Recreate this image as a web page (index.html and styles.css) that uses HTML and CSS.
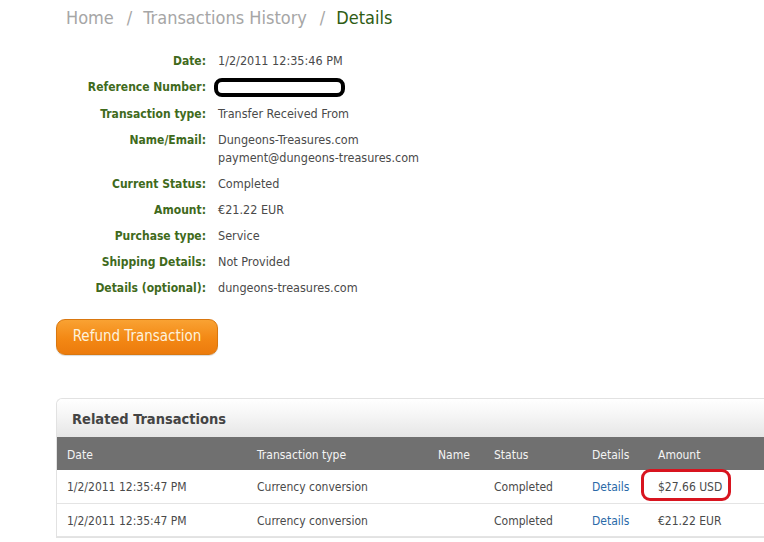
FILE: index.html
```html
<!DOCTYPE html>
<html>
<head>
<meta charset="utf-8">
<link rel="stylesheet" href="styles.css">
</head>
<body>
<div class="page">
  <nav class="crumbs">
    <span class="crumb">Home</span><span class="sep">/</span><span class="crumb">Transactions History</span><span class="sep">/</span><span class="crumb current">Details</span>
  </nav>

  <dl class="details">
    <div class="row"><dt>Date:</dt><dd>1/2/2011 12:35:46 PM</dd></div>
    <div class="row"><dt>Reference Number:</dt><dd><span class="redacted"></span></dd></div>
    <div class="row"><dt>Transaction type:</dt><dd>Transfer Received From</dd></div>
    <div class="row"><dt>Name/Email:</dt><dd>Dungeons-Treasures.com<br>payment@dungeons-treasures.com</dd></div>
    <div class="row"><dt>Current Status:</dt><dd>Completed</dd></div>
    <div class="row"><dt>Amount:</dt><dd>€21.22 EUR</dd></div>
    <div class="row"><dt>Purchase type:</dt><dd>Service</dd></div>
    <div class="row"><dt>Shipping Details:</dt><dd>Not Provided</dd></div>
    <div class="row"><dt>Details (optional):</dt><dd>dungeons-treasures.com</dd></div>
  </dl>

  <button class="refund">Refund Transaction</button>

  <section class="panel">
    <h2 class="panel-title">Related Transactions</h2>
    <table class="related">
      <thead>
        <tr><th class="c-date">Date</th><th class="c-type">Transaction type</th><th class="c-name">Name</th><th class="c-status">Status</th><th class="c-det">Details</th><th class="c-amt">Amount</th></tr>
      </thead>
      <tbody>
        <tr><td>1/2/2011 12:35:47 PM</td><td>Currency conversion</td><td></td><td>Completed</td><td><a class="link">Details</a></td><td><span class="circled">$27.66 USD</span></td></tr>
        <tr><td>1/2/2011 12:35:47 PM</td><td>Currency conversion</td><td></td><td>Completed</td><td><a class="link">Details</a></td><td>€21.22 EUR</td></tr>
      </tbody>
    </table>
  </section>
</div>
</body>
</html>
```

FILE: styles.css
```css
html, body {
  margin: 0;
  padding: 0;
  background: #fff;
  overflow: hidden;
}
body {
  width: 764px;
  height: 542px;
  font-family: "DejaVu Sans Condensed", "DejaVu Sans", sans-serif;
  color: #4a4a4a;
}
.page {
  padding: 0 0 0 56px;
  display: flex;
  flex-direction: column;
  align-items: flex-start;
}
.crumbs {
  margin: 6px 0 0 10px;
  font-size: 18px;
  line-height: 24px;
  color: #a6a6a6;
  white-space: nowrap;
}
.sep {
  margin: 0 11px 0 13px;
}
.crumb.current {
  color: #2f5c14;
}
.details {
  margin: 22px 0 0 0;
  display: flex;
  flex-direction: column;
  gap: 8px;
  font-size: 12.5px;
  line-height: 18px;
}
.row {
  display: flex;
}
dt {
  width: 150px;
  text-align: right;
  color: #3f6a1c;
  font-weight: bold;
  font-size: 12px;
  padding-right: 12px;
}
dd {
  margin: 0;
  color: #4a4a4a;
}
.redacted {
  display: inline-block;
  box-sizing: border-box;
  width: 131px;
  height: 19px;
  margin-left: -4px;
  border: 4px solid #000;
  border-radius: 8px;
  vertical-align: middle;
  background: #fff;
}
.refund {
  margin-top: 22px;
  width: 162px;
  height: 36px;
  border: 1px solid #d9770f;
  border-radius: 9px;
  background: linear-gradient(#f9a233, #f38814 55%, #ec7b0d);
  color: #fdf2dc;
  font-family: inherit;
  font-size: 15px;
  padding: 0 0 2px 0;
  box-shadow: 0 1px 1px rgba(0,0,0,0.15);
}
.panel {
  margin-top: 43px;
  width: 730px;
  border: 1px solid #e2e2e2;
  border-right: none;
  border-radius: 6px 0 0 0;
  box-sizing: border-box;
}
.panel-title {
  margin: 0;
  height: 38px;
  box-sizing: border-box;
  padding: 2px 15px 0;
  display: flex;
  align-items: center;
  font-size: 14.5px;
  font-weight: bold;
  color: #444;
  background: linear-gradient(#ffffff, #f6f6f6 40%, #e6e6e6);
  border-radius: 6px 0 0 0;
}
.related {
  width: 100%;
  table-layout: fixed;
  border-collapse: collapse;
  font-size: 12px;
}
.related th {
  background: #707070;
  color: #f4f4f4;
  font-weight: normal;
  text-align: left;
  height: 33px;
  padding: 2px 0 0 0;
  box-sizing: border-box;
}
.related td {
  height: 33px;
  padding: 2px 0 0 0;
  box-sizing: border-box;
  border-bottom: 1px solid #e4e4e4;
  color: #4a4a4a;
}
.related th:first-child, .related td:first-child {
  padding-left: 10px;
}
.c-date { width: 200px; }
.c-type { width: 181px; }
.c-name { width: 56px; }
.c-status { width: 98px; }
.c-det { width: 66px; }
.link {
  color: #2a6aa8;
}
.circled {
  display: inline-block;
  position: relative;
}
.circled::after {
  content: "";
  position: absolute;
  left: -17px;
  top: -11px;
  width: 90px;
  height: 32px;
  box-sizing: border-box;
  border: 3px solid #d8141f;
  border-radius: 9px;
}
```
